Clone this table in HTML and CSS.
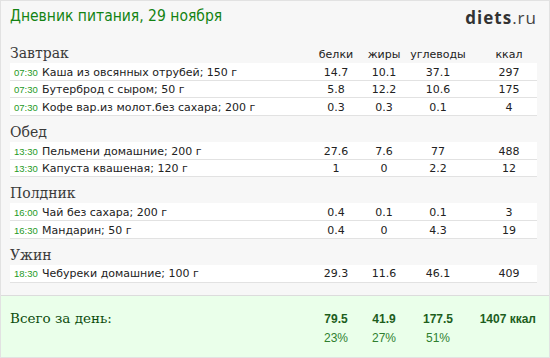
FILE: index.html
```html
<!DOCTYPE html>
<html lang="ru">
<head>
<meta charset="utf-8">
<title>Дневник питания</title>
<link rel="stylesheet" href="styles.css">
</head>
<body>
<div class="page">
  <header class="top">
    <h1 class="title">Дневник питания, 29 ноября</h1>
    <div class="logo"><b>diets</b>.ru</div>
  </header>
  <main class="diary">
    <section class="meal">
      <div class="meal-head grid"><h2>Завтрак</h2><span class="col">белки</span><span class="col">жиры</span><span class="col">углеводы</span><span class="col kcal">ккал</span></div>
      <div class="row grid"><div class="food"><span class="time">07:30</span>Каша из овсянных отрубей; 150 г</div><span class="col">14.7</span><span class="col">10.1</span><span class="col">37.1</span><span class="col kcal">297</span></div>
      <div class="row grid"><div class="food"><span class="time">07:30</span>Бутерброд с сыром; 50 г</div><span class="col">5.8</span><span class="col">12.2</span><span class="col">10.6</span><span class="col kcal">175</span></div>
      <div class="row grid"><div class="food"><span class="time">07:30</span>Кофе вар.из молот.без сахара; 200 г</div><span class="col">0.3</span><span class="col">0.3</span><span class="col">0.1</span><span class="col kcal">4</span></div>
    </section>
    <section class="meal">
      <div class="meal-head grid"><h2>Обед</h2></div>
      <div class="row grid"><div class="food"><span class="time">13:30</span>Пельмени домашние; 200 г</div><span class="col">27.6</span><span class="col">7.6</span><span class="col">77</span><span class="col kcal">488</span></div>
      <div class="row grid"><div class="food"><span class="time">13:30</span>Капуста квашеная; 120 г</div><span class="col">1</span><span class="col">0</span><span class="col">2.2</span><span class="col kcal">12</span></div>
    </section>
    <section class="meal">
      <div class="meal-head grid"><h2>Полдник</h2></div>
      <div class="row grid"><div class="food"><span class="time">16:00</span>Чай без сахара; 200 г</div><span class="col">0.4</span><span class="col">0.1</span><span class="col">0.1</span><span class="col kcal">3</span></div>
      <div class="row grid"><div class="food"><span class="time">16:30</span>Мандарин; 50 г</div><span class="col">0.4</span><span class="col">0</span><span class="col">4.3</span><span class="col kcal">19</span></div>
    </section>
    <section class="meal">
      <div class="meal-head grid"><h2>Ужин</h2></div>
      <div class="row grid"><div class="food"><span class="time">18:30</span>Чебуреки домашние; 100 г</div><span class="col">29.3</span><span class="col">11.6</span><span class="col">46.1</span><span class="col kcal">409</span></div>
    </section>
  </main>
  <footer class="totals grid">
    <div class="total-label">Всего за день:</div>
    <span class="col sum">79.5</span><span class="col sum">41.9</span><span class="col sum">177.5</span><span class="col sum sum-kcal">1407 ккал</span>
    <div></div>
    <span class="col pct">23%</span><span class="col pct">27%</span><span class="col pct">51%</span><span class="col kcal"></span>
  </footer>
</div>
</body>
</html>
```
FILE: styles.css
```css
* { box-sizing: border-box; }
html, body { margin: 0; padding: 0; }
body { background: #f6f6f6; font-family: "DejaVu Sans", Verdana, sans-serif; }

.page {
  width: 550px;
  height: 358px;
  border: 1px solid #e2e2e2;
  background: #f7f7f7;
  display: flex;
  flex-direction: column;
}

.top {
  height: 36px;
  padding: 5px 12px 0 9px;
  display: flex;
  justify-content: space-between;
  align-items: flex-start;
}
.title {
  margin: 0;
  font-weight: normal;
  font-size: 15.5px;
  line-height: 20px;
  color: #138313;
  font-family: "DejaVu Sans Condensed", "DejaVu Sans", Verdana, sans-serif;
  font-stretch: condensed;
}
.logo {
  font-family: "Open Sans", sans-serif;
  font-size: 17px;
  line-height: 20px;
  color: #444;
  letter-spacing: 1px;
  margin-top: 2px;
}
.logo b { color: #333; font-weight: 700; }

.diary {
  flex: 1;
  padding: 0 12px 0 9px;
}

.grid {
  display: grid;
  grid-template-columns: 1fr 48px 48px 60px 69px;
  align-items: baseline;
}
.col { text-align: center; white-space: nowrap; }
.kcal { padding-left: 13px; }

.meal-head {
  height: 26px;
  padding-top: 7px;
  line-height: 18px;
  font-size: 11px;
  color: #222;
}
.meal-head h2 {
  margin: 0;
  font-family: "DejaVu Serif", Georgia, serif;
  font-weight: normal;
  font-size: 14px;
  line-height: 18px;
  color: #3a3a3a;
}

.row {
  background: #fff;
  border-bottom: 1px solid #e2e2e2;
  height: 17.7px;
  padding-top: 2.5px;
  font-size: 11px;
  line-height: 14px;
  color: #222;
}
.food { padding-left: 4px; white-space: nowrap; }
.time {
  display: inline-block;
  width: 28px;
  font-family: "Liberation Sans", Arial, sans-serif;
  font-size: 9.5px;
  color: #1e9a1e;
}

.totals {
  height: 62px;
  flex: none;
  background: #eaffea;
  border-top: 1px solid #dcdcdc;
  padding: 12px 12px 0 9px;
  line-height: 20px;
  font-family: "Liberation Sans", Arial, sans-serif;
  font-size: 12px;
  grid-template-rows: 20px 20px;
}
.total-label {
  font-family: "DejaVu Serif", Georgia, serif;
  font-size: 13.5px;
  color: #0d4d0d;
}
.sum { font-weight: bold; color: #1d5e1d; }
.sum-kcal { text-align: right; padding-right: 1px; }
.pct { color: #2f7f2f; }
```
